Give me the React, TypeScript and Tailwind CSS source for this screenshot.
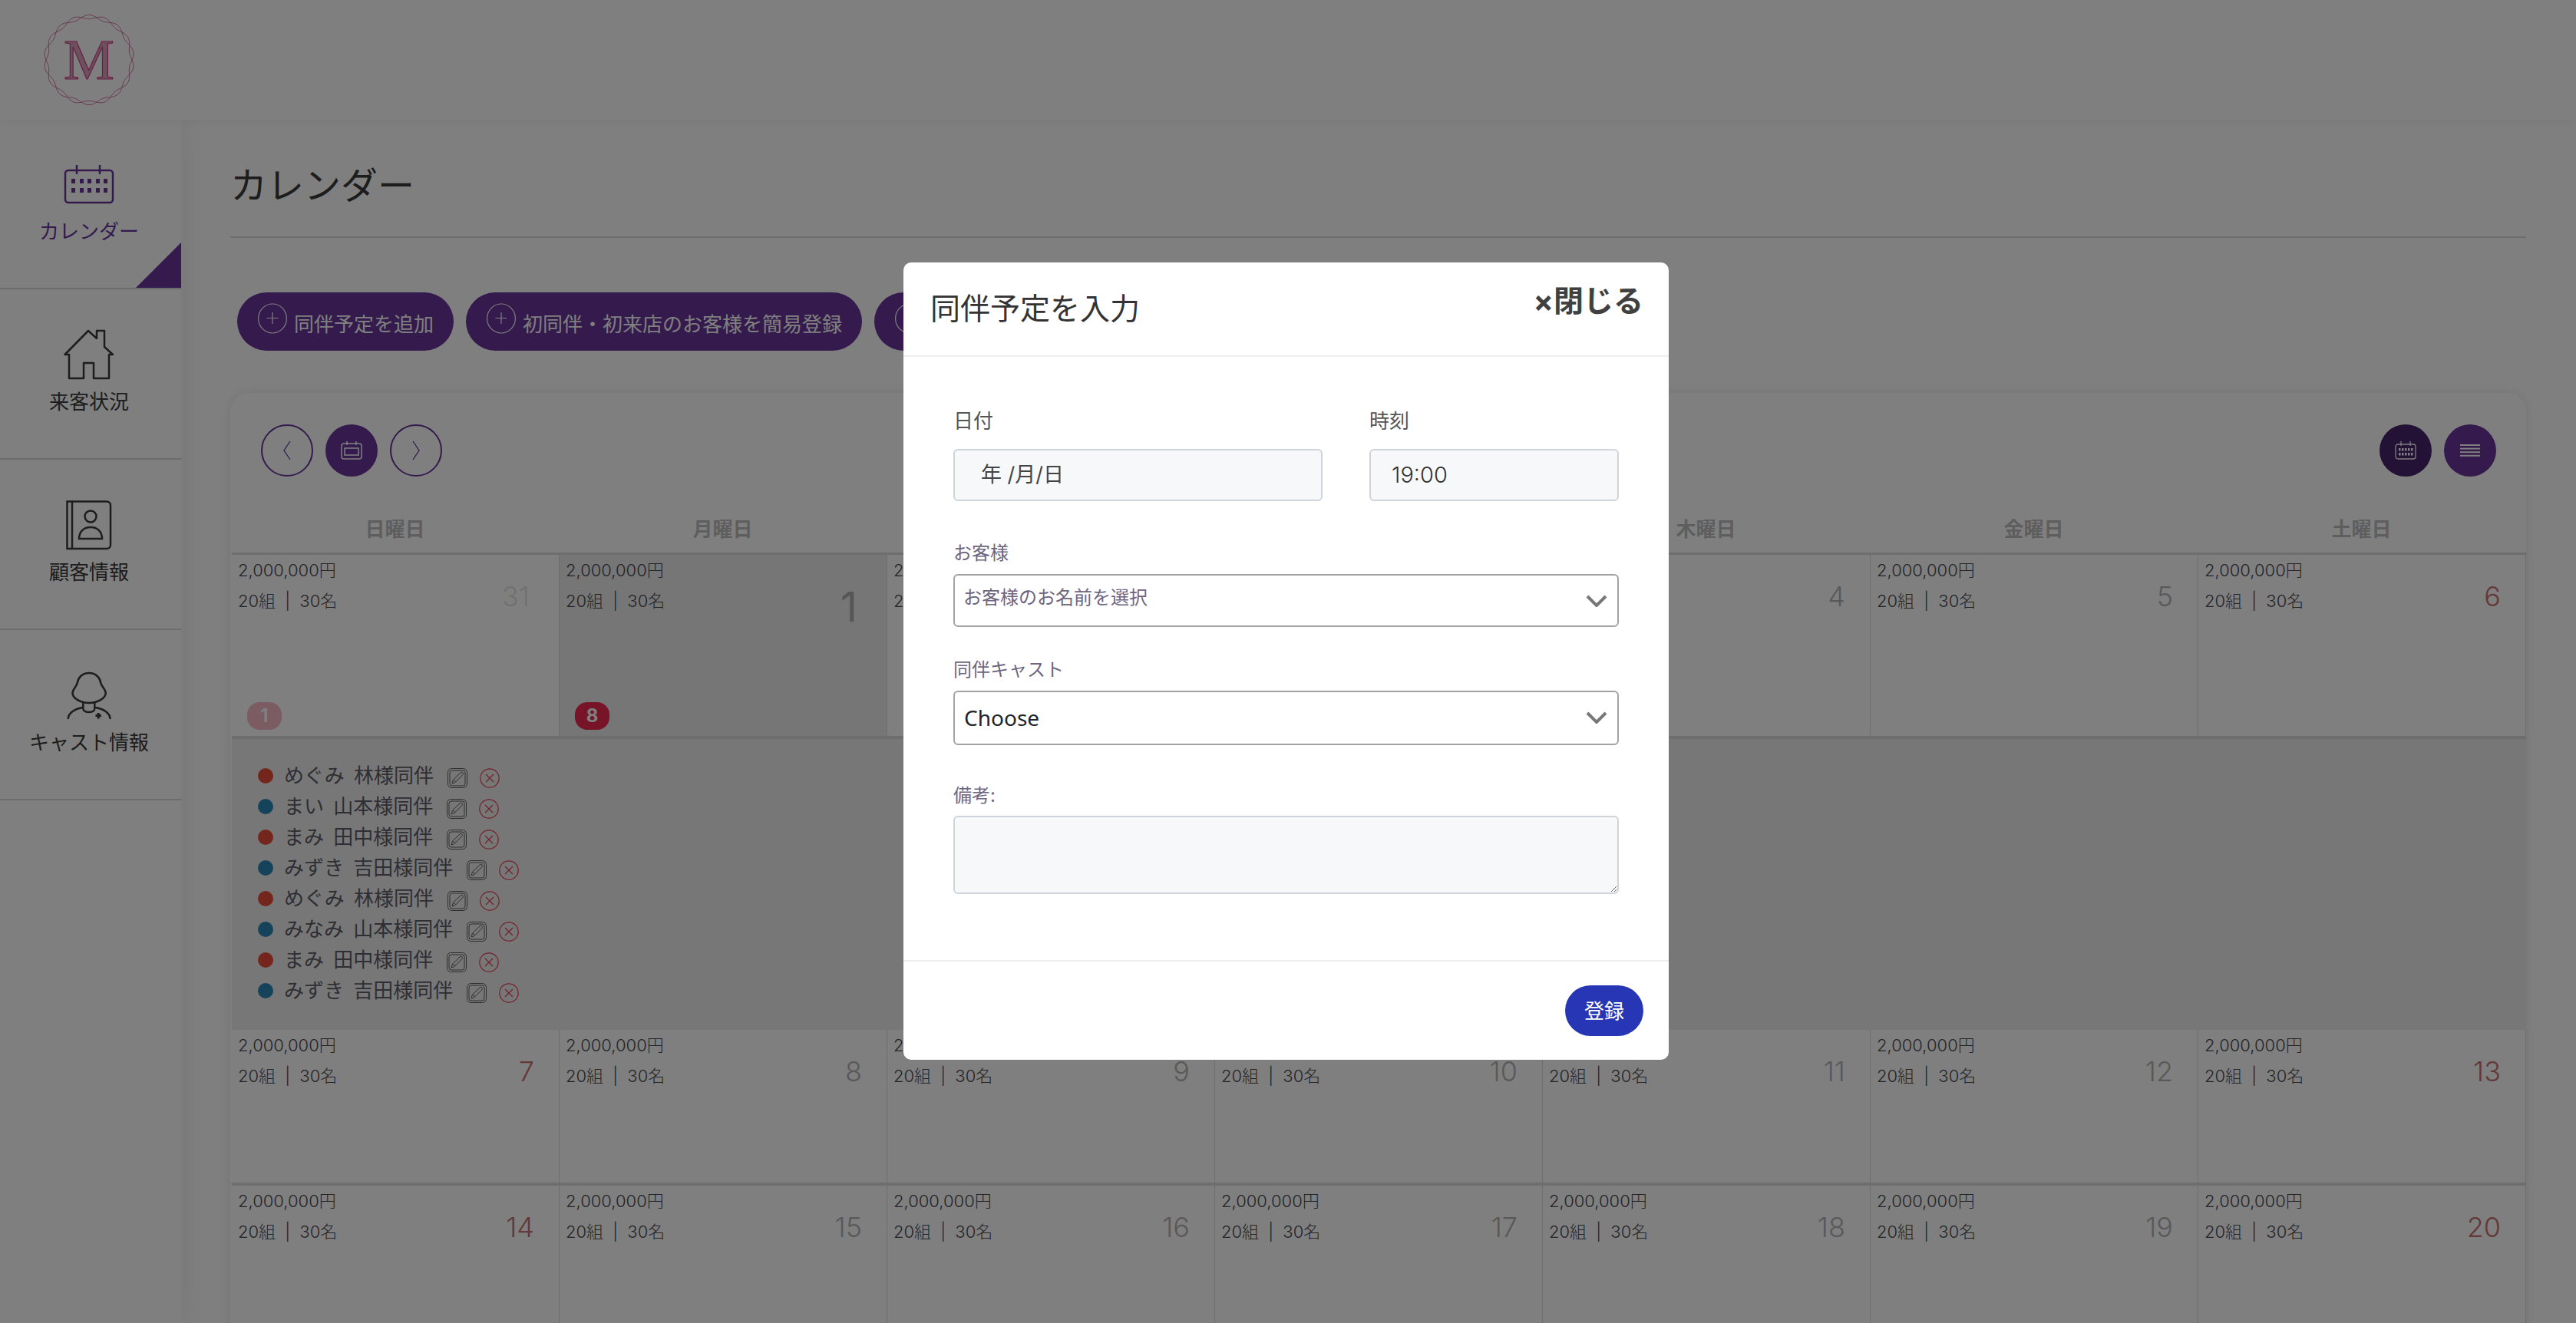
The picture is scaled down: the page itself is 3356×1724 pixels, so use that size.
import React from "react";

const PURPLE = "#68349a";

function ringPath(sign: number) {
  const pts: string[] = [];
  for (let i = 0; i <= 360; i += 2) {
    const t = (i * Math.PI) / 180;
    const r = 56 + sign * 2.6 * Math.sin(9 * t);
    pts.push(`${(59 + r * Math.cos(t)).toFixed(2)},${(60 + r * Math.sin(t)).toFixed(2)}`);
  }
  return "M" + pts.join("L") + "Z";
}

function Logo() {
  return (
    <svg width="118" height="120" viewBox="0 0 118 120" fill="none">
      <path d={ringPath(1)} stroke="#c85a8c" strokeWidth="0.8" />
      <path d={ringPath(-1)} stroke="#c85a8c" strokeWidth="0.8" />
      <text x="59" y="85" textAnchor="middle" fontFamily="Liberation Serif" fontSize="74" fontWeight="400" fill="#d8a0bc" stroke="#d43c88" strokeWidth="1.2">M</text>
    </svg>
  );
}

function CalIcon() {
  return (
    <svg width="66" height="52" viewBox="0 0 66 52" fill="none" stroke={PURPLE} strokeWidth="2.5">
      <rect x="2" y="8" width="62" height="42" rx="4" />
      <path d="M17 1v12M47 1v12" />
      <g fill={PURPLE} stroke="none">
        {[10, 21, 31, 42, 52].flatMap((x) => [19, 31].map((y) => <rect key={`${x}-${y}`} x={x} y={y} width="5" height="6" />))}
      </g>
    </svg>
  );
}

function HouseIcon() {
  return (
    <svg width="66" height="66" viewBox="0 0 66 66" fill="none" stroke="#3a3a3a" strokeWidth="2.5" strokeLinejoin="round">
      <path d="M1.5 33 32 2l11 10V2h10v21l11 10h-5v31H39V44H26v20H7V33z" />
    </svg>
  );
}

function BookIcon() {
  return (
    <svg width="60" height="65" viewBox="0 0 60 65" fill="none" stroke="#3a3a3a" strokeWidth="2.5">
      <path d="M1.5 1.5H53a5 5 0 0 1 5 5V58a5 5 0 0 1-5 5H1.5z" />
      <path d="M8 1.5V63" />
      <circle cx="32" cy="21" r="7.5" />
      <path d="M17 50c0-9 6-15 15-15s15 6 15 15z" />
    </svg>
  );
}

function CastIcon() {
  return (
    <svg width="58" height="63" viewBox="0 0 58 63" fill="none" stroke="#3a3a3a" strokeWidth="2.5" strokeLinecap="round">
      <path d="M29 2C20 2 15 8 14 14C13 20 7.5 23 7.5 28C7.5 35 18 41 29 41S50.700 35 50.700 28C50.700 23 45 20 44 14C43 8 38 2 29 2Z" />
      <path d="M21.300 41V48c0 3 3 5 7.500 5s7.500-2 7.500-5V41" />
      <path d="M1.800 61c1-8 9-12 18.500-14M56.500 61c-1-8-9-12-19-14" />
      <path d="M37.500 57.600h7.500M41.200 54v7.500" strokeWidth="3" strokeLinecap="butt" />
    </svg>
  );
}

function NavItem({ icon, label, active }: { icon: React.ReactNode; label: string; active?: boolean }) {
  return (
    <div className="relative flex h-[222px] flex-col items-center border-b-[2px] border-[#d8d8d8] pr-[4px] pt-[53px]">
      <div className="flex h-[64px] items-center justify-center">{icon}</div>
      <div className={`mt-[12px] text-[26px] leading-[36px] ${active ? "text-[#68349a]" : "text-[#3a3a3a]"}`}>{label}</div>
      {active && <div className="absolute bottom-0 right-0 h-[59px] w-[59px] bg-[#68349a] [clip-path:polygon(100%_0,100%_100%,0_100%)]" />}
    </div>
  );
}

function PlusBtn({ text, extra }: { text?: string; extra?: string }) {
  return (
    <div className={`flex h-[76px] shrink-0 items-center gap-[9px] rounded-full bg-[#68349a] pl-[27px] pr-[26px] ${extra ?? ""}`}>
      <svg className="mt-[-8px]" width="38" height="40" viewBox="0 0 38 40" fill="none" stroke="#fff" strokeWidth="1.2">
        <ellipse cx="19" cy="20" rx="18.400" ry="19" />
        <path d="M19 12v15M11.500 19.500h15" />
      </svg>
      {text && <span className="mt-[8px] text-[26px] leading-[36px] text-white">{text}</span>}
    </div>
  );
}

function Circle({ children, variant }: { children: React.ReactNode; variant: "line" | "fill" | "dark" }) {
  const cls =
    variant === "line"
      ? "border-[2px] border-[#68349a] bg-white"
      : variant === "fill"
      ? "bg-[#68349a]"
      : "bg-[#46246a]";
  return <div className={`flex h-[68px] w-[68px] items-center justify-center rounded-full ${cls}`}>{children}</div>;
}

function Cell({ day, red, pale, today, badge, badgePale }: { day: number; red?: boolean; pale?: boolean; today?: boolean; badge?: string; badgePale?: boolean }) {
  const color = pale ? "mr-[38px] text-[#e8e0e0]" : red ? "mr-[32px] text-[#c87070]" : "mr-[32px] text-[#b2b2b2]";
  return (
    <div className={`relative flex h-full justify-between border-r border-[#dcdcdc] pl-[8px] ${today ? "bg-[#ececec]" : "bg-white"}`}>
      <div className="text-[22px] font-light leading-[40px] text-[#48484f]">
        <div>2,000,000円</div>
        <div className="[word-spacing:6px]">20組 | 30名</div>
      </div>
      {today ? (
        <div className="mr-[38px] mt-[38px] text-[54px] leading-[60px] text-[#adadad]">{day}</div>
      ) : (
        <div className={`mt-[34px] text-[36px] font-light leading-[40px] ${color}`}>{day}</div>
      )}
      {badge && (
        <div className={`absolute bottom-[8px] left-[20px] flex h-[36px] w-[45px] items-center justify-center rounded-[16px] text-[24px] font-bold leading-none text-white ${badgePale ? "bg-[#f5b8c5]" : "bg-[#f02850]"}`}>
          {badge}
        </div>
      )}
    </div>
  );
}

const events: [string, boolean][] = [
  ["めぐみ 林様同伴", true],
  ["まい 山本様同伴", false],
  ["まみ 田中様同伴", true],
  ["みずき 吉田様同伴", false],
  ["めぐみ 林様同伴", true],
  ["みなみ 山本様同伴", false],
  ["まみ 田中様同伴", true],
  ["みずき 吉田様同伴", false],
];

function EventRow({ name, red }: { name: string; red: boolean }) {
  return (
    <div className="flex h-[40px] items-center">
      <span className={`h-[20px] w-[20px] rounded-full ${red ? "bg-[#e84c38]" : "bg-[#2a86b6]"}`} />
      <span className="ml-[14px] text-[26px] leading-[36px] text-[#5c5c68] [word-spacing:5px]">{name}</span>
      <svg className="ml-[18px] mt-[6px]" width="26" height="26" viewBox="0 0 26 26" fill="none" stroke="#5c5c5c" strokeWidth="1">
        <rect x="0.500" y="0.500" width="25" height="25" rx="5" />
        <rect x="3" y="3" width="20" height="20" rx="3" />
        <path d="M6 20l1.500-5L17 6c1-1 2.500-1 3 0s.5 2-.5 3l-9.500 9.500z" />
        <path d="M8 15l3 3" />
      </svg>
      <svg className="ml-[16px] mt-[6px]" width="26" height="26" viewBox="0 0 26 26" fill="none" stroke="#e84058" strokeWidth="1.200">
        <circle cx="13" cy="13" r="12.200" />
        <path d="M8 8l10 10M18 8L8 18" />
      </svg>
    </div>
  );
}

function Chevron() {
  return (
    <svg width="28" height="16" viewBox="0 0 28 16" fill="none" stroke="#777" strokeWidth="4">
      <path d="M2 2l12 12L26 2" />
    </svg>
  );
}

const labelCls = "text-[24px] leading-[36px] text-[#6e6680]";

export default function App() {
  const weekdays = ["日", "月", "火", "水", "木", "金", "土"];
  return (
    <div className="relative h-[1724px] w-[3356px] overflow-hidden bg-white font-['Inter','Noto_Sans_CJK_JP',sans-serif]">
      <header className="relative z-20 flex h-[156px] items-center bg-white pl-[57px] shadow-[0_2px_14px_rgba(0,0,0,0.06)]">
        <Logo />
      </header>
      <div className="flex">
        <aside className="relative z-10 mt-[-1px] h-[1569px] w-[236px] shrink-0 bg-white shadow-[0_0_40px_rgba(0,0,0,0.08)]">
          <NavItem icon={<CalIcon />} label="カレンダー" active />
          <NavItem icon={<HouseIcon />} label="来客状況" />
          <NavItem icon={<BookIcon />} label="顧客情報" />
          <NavItem icon={<CastIcon />} label="キャスト情報" />
        </aside>
        <main className="min-w-0 flex-1 pl-[64px] pr-[65px]">
          <div className="flex h-[154px] items-end border-b-[2px] border-[#dcdcdc] pb-[34px]">
            <h1 className="text-[48px] font-normal leading-[64px] text-[#3a3a3a]">カレンダー</h1>
          </div>
          <div className="mt-[71px] flex gap-[16px] pl-[9px]">
            <PlusBtn text="同伴予定を追加" />
            <PlusBtn text="初同伴・初来店のお客様を簡易登録" />
            <PlusBtn extra="w-[300px]" />
          </div>
          <section className="mt-[55px] rounded-t-[24px] bg-white shadow-[0_0_14px_rgba(0,0,0,0.10)]">
            <div className="flex justify-between pl-[40px] pr-[39px] pt-[41px]">
              <div className="flex gap-[16px]">
                <Circle variant="line">
                  <svg width="14" height="26" viewBox="0 0 14 26" fill="none" stroke="#68349a" strokeWidth="1.300"><path d="M11 1L3 13l8 12" /></svg>
                </Circle>
                <Circle variant="fill">
                  <svg width="28" height="24" viewBox="0 0 28 24" fill="none" stroke="#fff" strokeWidth="1.500">
                    <rect x="1" y="3" width="26" height="20" rx="3" /><rect x="5" y="9" width="18" height="9" /><path d="M8 0v5M20 0v5" />
                  </svg>
                </Circle>
                <Circle variant="line">
                  <svg width="14" height="26" viewBox="0 0 14 26" fill="none" stroke="#68349a" strokeWidth="1.300"><path d="M3 1l8 12L3 25" /></svg>
                </Circle>
              </div>
              <div className="flex gap-[16px]">
                <Circle variant="dark">
                  <svg width="28" height="24" viewBox="0 0 28 24" fill="none" stroke="#fff" strokeWidth="1.300">
                    <rect x="1" y="4" width="26" height="19" rx="3" /><path d="M8 0v6M20 0v6" />
                    <g fill="#fff" stroke="none">{[5, 9, 13, 17, 21].flatMap((x) => [9, 15].map((y) => <rect key={`${x}${y}`} x={x} y={y} width="2.500" height="3.500" />))}</g>
                  </svg>
                </Circle>
                <Circle variant="fill">
                  <svg width="26" height="16" viewBox="0 0 26 16" fill="#fff"><rect y="0" width="26" height="2" /><rect y="4.600" width="26" height="2" /><rect y="9.200" width="26" height="2" /><rect y="13.800" width="26" height="2" /></svg>
                </Circle>
              </div>
            </div>
            <div className="ml-[2px] mt-[36px] grid h-[66px] grid-cols-7 items-center border-b-[3px] border-[#dcdcdc] pt-[3px]">
              {weekdays.map((d) => (
                <div key={d} className="pr-[2px] text-center text-[26px] font-bold leading-[36px] text-[#bcbcbc]">{d}曜日</div>
              ))}
            </div>
            <div className="ml-[2px] grid h-[240px] grid-cols-7 border-b-[4px] border-[#dcdcdc]">
              <Cell day={31} pale badge="1" badgePale />
              <Cell day={1} today badge="8" />
              <Cell day={2} />
              <Cell day={3} />
              <Cell day={4} />
              <Cell day={5} />
              <Cell day={6} red />
            </div>
            <div className="ml-[2px] h-[379px] bg-[#eeeeee] pl-[34px] pt-[28px]">
              {events.map(([n, r], i) => (
                <EventRow key={i} name={n} red={r} />
              ))}
            </div>
            <div className="ml-[2px] grid h-[203px] grid-cols-7 border-b-[4px] border-[#dcdcdc]">
              {[7, 8, 9, 10, 11, 12, 13].map((d) => (
                <Cell key={d} day={d} red={d === 7 || d === 13} />
              ))}
            </div>
            <div className="ml-[2px] grid h-[203px] grid-cols-7">
              {[14, 15, 16, 17, 18, 19, 20].map((d) => (
                <Cell key={d} day={d} red={d === 14 || d === 20} />
              ))}
            </div>
          </section>
        </main>
      </div>

      <div className="absolute inset-0 z-30 bg-black/50" />
      <div className="absolute left-[1177px] top-[342px] z-40 w-[997px] rounded-[10px] bg-white">
        <div className="flex h-[123px] justify-between border-b-[2px] border-[#eeeeee] pl-[35px] pr-[33px]">
          <h2 className="mt-[34px] text-[39px] font-normal leading-[52px] text-[#333]">同伴予定を入力</h2>
          <div className="mt-[24px] text-[39px] font-bold leading-[52px] text-[#404040]">×閉じる</div>
        </div>
        <div className="pb-[86px] pl-[65px] pr-[65px] pt-[66px]">
          <div className="flex gap-[61px]">
            <div className="w-[481px]">
              <div className="mb-[18px] text-[26px] leading-[36px] text-[#555]">日付</div>
              <div className="flex h-[68px] items-center rounded-[6px] border-[2px] border-[#ced4da] bg-[#f7f8fa] pl-[34px] text-[27px] text-[#444]">年 /月/日</div>
            </div>
            <div className="w-[325px]">
              <div className="mb-[18px] text-[26px] leading-[36px] text-[#555]">時刻</div>
              <div className="flex h-[68px] items-center rounded-[6px] border-[2px] border-[#ced4da] bg-[#f7f8fa] pl-[27px] text-[29px] font-light text-[#333]">19:00</div>
            </div>
          </div>
          <div className={`mt-[50px] mb-[9px] ${labelCls}`}>お客様</div>
          <div className="flex h-[69px] items-center justify-between rounded-[6px] border-[2px] border-[#a3a3a3] pb-[8px] pl-[11px] pr-[13px]">
            <span className="text-[24px] leading-[36px] text-[#6e6680]">お客様のお名前を選択</span>
            <span className="mt-[8px] flex"><Chevron /></span>
          </div>
          <div className={`mt-[38px] mb-[9px] ${labelCls}`}>同伴キャスト</div>
          <div className="flex h-[71px] items-center justify-between rounded-[6px] border-[2px] border-[#a3a3a3] pb-[2px] pl-[12px] pr-[13px]">
            <span className="font-['Noto_Sans',sans-serif] text-[28px] leading-[36px] text-[#212529]">Choose</span>
            <Chevron />
          </div>
          <div className={`mt-[48px] mb-[8px] ${labelCls}`}>備考:</div>
          <textarea aria-label="備考" className="block h-[102px] w-full rounded-[6px] border-[2px] border-[#ced4da] bg-[#f7f8fa]" />
        </div>
        <div className="flex justify-end border-t-[2px] border-[#eeeeee] pb-[31px] pr-[33px] pt-[31px]">
          <div className="flex h-[66px] w-[102px] items-center justify-center rounded-full bg-[#2636b4] text-[26px] text-white">登録</div>
        </div>
      </div>
    </div>
  );
}
